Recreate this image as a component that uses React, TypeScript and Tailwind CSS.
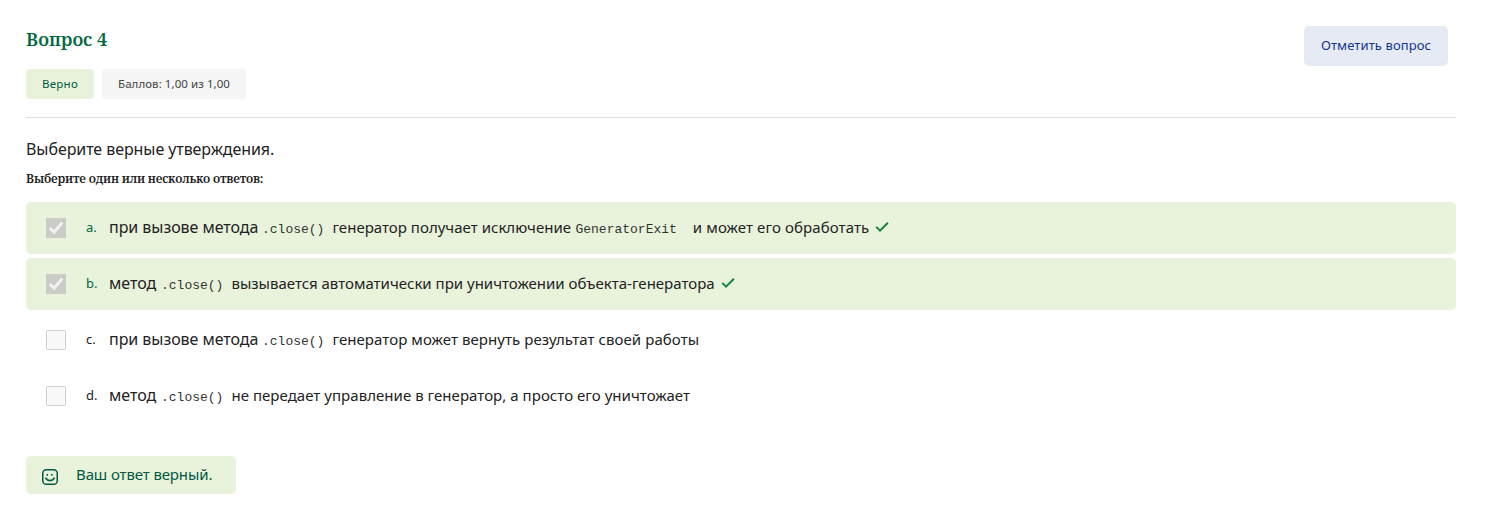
import type { ReactNode } from "react";

function Tick() {
  return (
    <svg className="mb-0.5 ml-1.5 h-3.5 w-3.5 shrink-0" viewBox="0 0 14 14" fill="none" stroke="#16833f" strokeWidth="2">
      <path d="M1.2 6.9 5 10.6 12.9 2.7" />
    </svg>
  );
}

function Checkbox({ checked }: { checked: boolean }) {
  if (!checked) {
    return <span className="h-5 w-5 shrink-0 rounded-[2px] border border-[#cfcfcf] bg-[#f8f8f8]" />;
  }
  return (
    <span className="flex h-5 w-5 shrink-0 items-center justify-center bg-[#cbcdc9]">
      <svg className="h-5 w-5" viewBox="0 0 20 20" fill="none" stroke="#f3f4f0" strokeWidth="2.8">
        <path d="M3.8 10 8.1 14.2 16.2 4.6" />
      </svg>
    </span>
  );
}

function Code({ children }: { children: ReactNode }) {
  return <code className="shrink-0 pt-1 font-['Liberation_Mono',monospace] text-[13px] text-[#30352f]">{children}</code>;
}

function Text({ className = "", children }: { className?: string; children: ReactNode }) {
  return <span className={`pb-0.5 ${className}`}>{children}</span>;
}

type AnswerProps = { letter: string; correct?: boolean; children: ReactNode };

function Answer({ letter, correct = false, children }: AnswerProps) {
  return (
    <div className={`flex h-[52px] items-center rounded-[5px] pl-5 ${correct ? "bg-[#e9f3dc]" : ""}`}>
      <Checkbox checked={correct} />
      <span className={`ml-5 w-[23px] shrink-0 text-[13px] ${correct ? "text-[#00693e]" : "text-[#222]"}`}>{letter}</span>
      <div className="flex items-center whitespace-nowrap text-[15px] leading-6">
        {children}
        {correct && <Tick />}
      </div>
    </div>
  );
}

export default function App() {
  return (
    <main className="h-[515px] bg-white pt-[26px] pr-8 pl-[26px] font-['Noto_Sans',sans-serif] text-[#222]">
      <header className="flex h-[92px] justify-between border-b border-[#dedede] pr-2">
        <div>
          <h2 className="h-[43px] font-['Noto_Serif','DejaVu_Serif_Condensed',serif] text-[18px] leading-[27px] font-semibold text-[#00693e]">
            Вопрос 4
          </h2>
          <div className="flex gap-2 text-[11.5px]">
            <span className="flex h-[30px] w-[68px] items-center justify-center rounded-[4px] bg-[#e9f3dc] tracking-[0.25px] text-[#00593f]">
              Верно
            </span>
            <span className="flex h-[30px] w-[144px] items-center justify-center rounded-[4px] bg-[#f5f5f5] tracking-[0.06px] text-[#444]">
              Баллов: 1,00 из 1,00
            </span>
          </div>
        </div>
        <button className="h-10 w-36 rounded-[5px] bg-[#e6eaf5] text-[13px] tracking-[0.1px] text-[#12348f]">Отметить вопрос</button>
      </header>

      <p className="mt-[19px] text-base leading-6 tracking-[-0.07px]">Выберите верные утверждения.</p>
      <h3 className="mt-[9px] font-['Noto_Serif','DejaVu_Serif_Condensed',serif] text-xs leading-[18px] font-semibold tracking-[-0.18px]">
        Выберите один или несколько ответов:
      </h3>

      <div className="mt-3.5 flex flex-col gap-1">
        <Answer letter="a." correct>
          <Text className="w-[153px] text-base tracking-[-0.05px]">при вызове метода</Text>
          <Code>.close()</Code>
          <Text className="ml-2 w-[243px] tracking-[0.02px]">генератор получает исключение</Text>
          <Code>GeneratorExit</Code>
          <Text className="ml-4 tracking-[0.1px]">и может его обработать</Text>
        </Answer>
        <Answer letter="b." correct>
          <Text className="w-[52px] text-base">метод</Text>
          <Code>.close()</Code>
          <Text className="ml-2">вызывается автоматически при уничтожении объекта-генератора</Text>
        </Answer>
        <Answer letter="c.">
          <Text className="w-[153px] text-base tracking-[-0.05px]">при вызове метода</Text>
          <Code>.close()</Code>
          <Text className="ml-2 tracking-[0.07px]">генератор может вернуть результат своей работы</Text>
        </Answer>
        <Answer letter="d.">
          <Text className="w-[52px] text-base">метод</Text>
          <Code>.close()</Code>
          <Text className="ml-2 tracking-[0.04px]">не передает управление в генератор, а просто его уничтожает</Text>
        </Answer>
      </div>

      <div className="mt-[34px] flex h-[38px] w-[210px] items-center rounded-[5px] bg-[#e9f3dc] pl-4 text-[#00593f]">
        <svg className="mt-1 h-4 w-4 shrink-0" viewBox="0 0 16 16" fill="none" stroke="currentColor" strokeWidth="1.5">
          <rect x=".75" y=".75" width="14.5" height="14.5" rx="3.6" />
          <path d="M3.6 8.6c1.7 4 7.1 4 8.8 0" />
          <path d="M5.3 5.1v1.7M9.9 5.1v1.7" />
        </svg>
        <Text className="ml-[18px] text-[15px] tracking-[-0.12px] whitespace-nowrap">Ваш ответ верный.</Text>
      </div>
    </main>
  );
}
